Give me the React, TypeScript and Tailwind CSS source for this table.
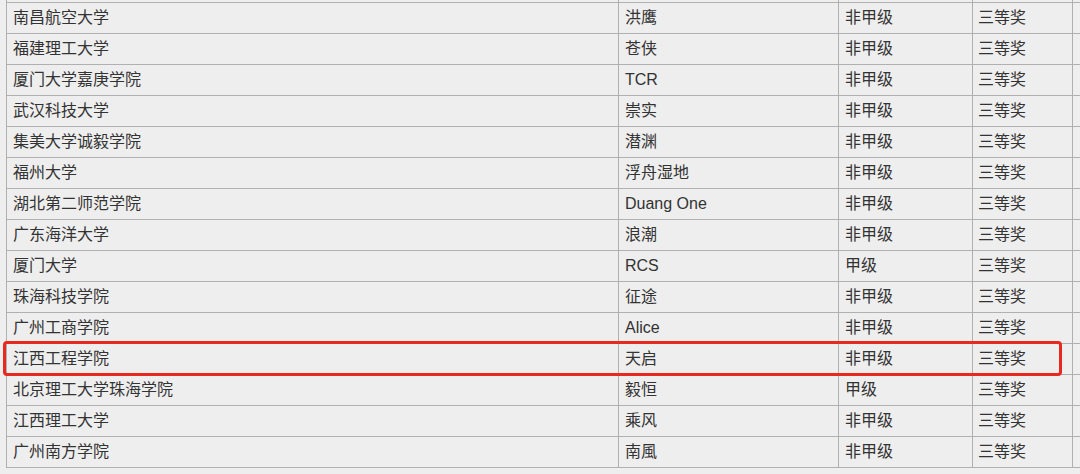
import React from "react";

const rows: [string, string, string, string][] = [
  ["南昌航空大学", "洪鹰", "非甲级", "三等奖"],
  ["福建理工大学", "苍侠", "非甲级", "三等奖"],
  ["厦门大学嘉庚学院", "TCR", "非甲级", "三等奖"],
  ["武汉科技大学", "崇实", "非甲级", "三等奖"],
  ["集美大学诚毅学院", "潜渊", "非甲级", "三等奖"],
  ["福州大学", "浮舟湿地", "非甲级", "三等奖"],
  ["湖北第二师范学院", "Duang One", "非甲级", "三等奖"],
  ["广东海洋大学", "浪潮", "非甲级", "三等奖"],
  ["厦门大学", "RCS", "甲级", "三等奖"],
  ["珠海科技学院", "征途", "非甲级", "三等奖"],
  ["广州工商学院", "Alice", "非甲级", "三等奖"],
  ["江西工程学院", "天启", "非甲级", "三等奖"],
  ["北京理工大学珠海学院", "毅恒", "甲级", "三等奖"],
  ["江西理工大学", "乘风", "非甲级", "三等奖"],
  ["广州南方学院", "南風", "非甲级", "三等奖"],
];

const cell = "border-l border-[#b0b0b0] flex items-center";

export default function App() {
  return (
    <div
      className="relative w-[1080px] h-[474px] overflow-hidden bg-[#eeeeee] text-[#333333] text-[16px]"
      style={{ fontFamily: '"Liberation Sans", Arial, "Noto Sans CJK SC", sans-serif' }}
    >
      <div className="ml-[6px]">
        <div className="grid grid-cols-[612px_220px_134px_100px_1fr] h-[3px] border-b border-[#b0b0b0]">
          <div className={cell} />
          <div className={cell} />
          <div className={cell} />
          <div className={cell} />
          <div className={cell} />
        </div>
        {rows.map((r, i) => (
          <div
            key={i}
            className="grid grid-cols-[612px_220px_134px_100px_1fr] h-[31px] border-b border-[#b0b0b0]"
          >
            <div className={`${cell} pl-[6px]`}>{r[0]}</div>
            <div className={`${cell} pl-[6px]`}>{r[1]}</div>
            <div className={`${cell} pl-[6px]`}>{r[2]}</div>
            <div className={`${cell} pl-[5px]`}>{r[3]}</div>
            <div className={cell} />
          </div>
        ))}
      </div>
      <div className="absolute left-[3px] top-[341px] w-[1059px] h-[35px] border-[3px] border-[#e8291f] rounded-[4px]" />
    </div>
  );
}
